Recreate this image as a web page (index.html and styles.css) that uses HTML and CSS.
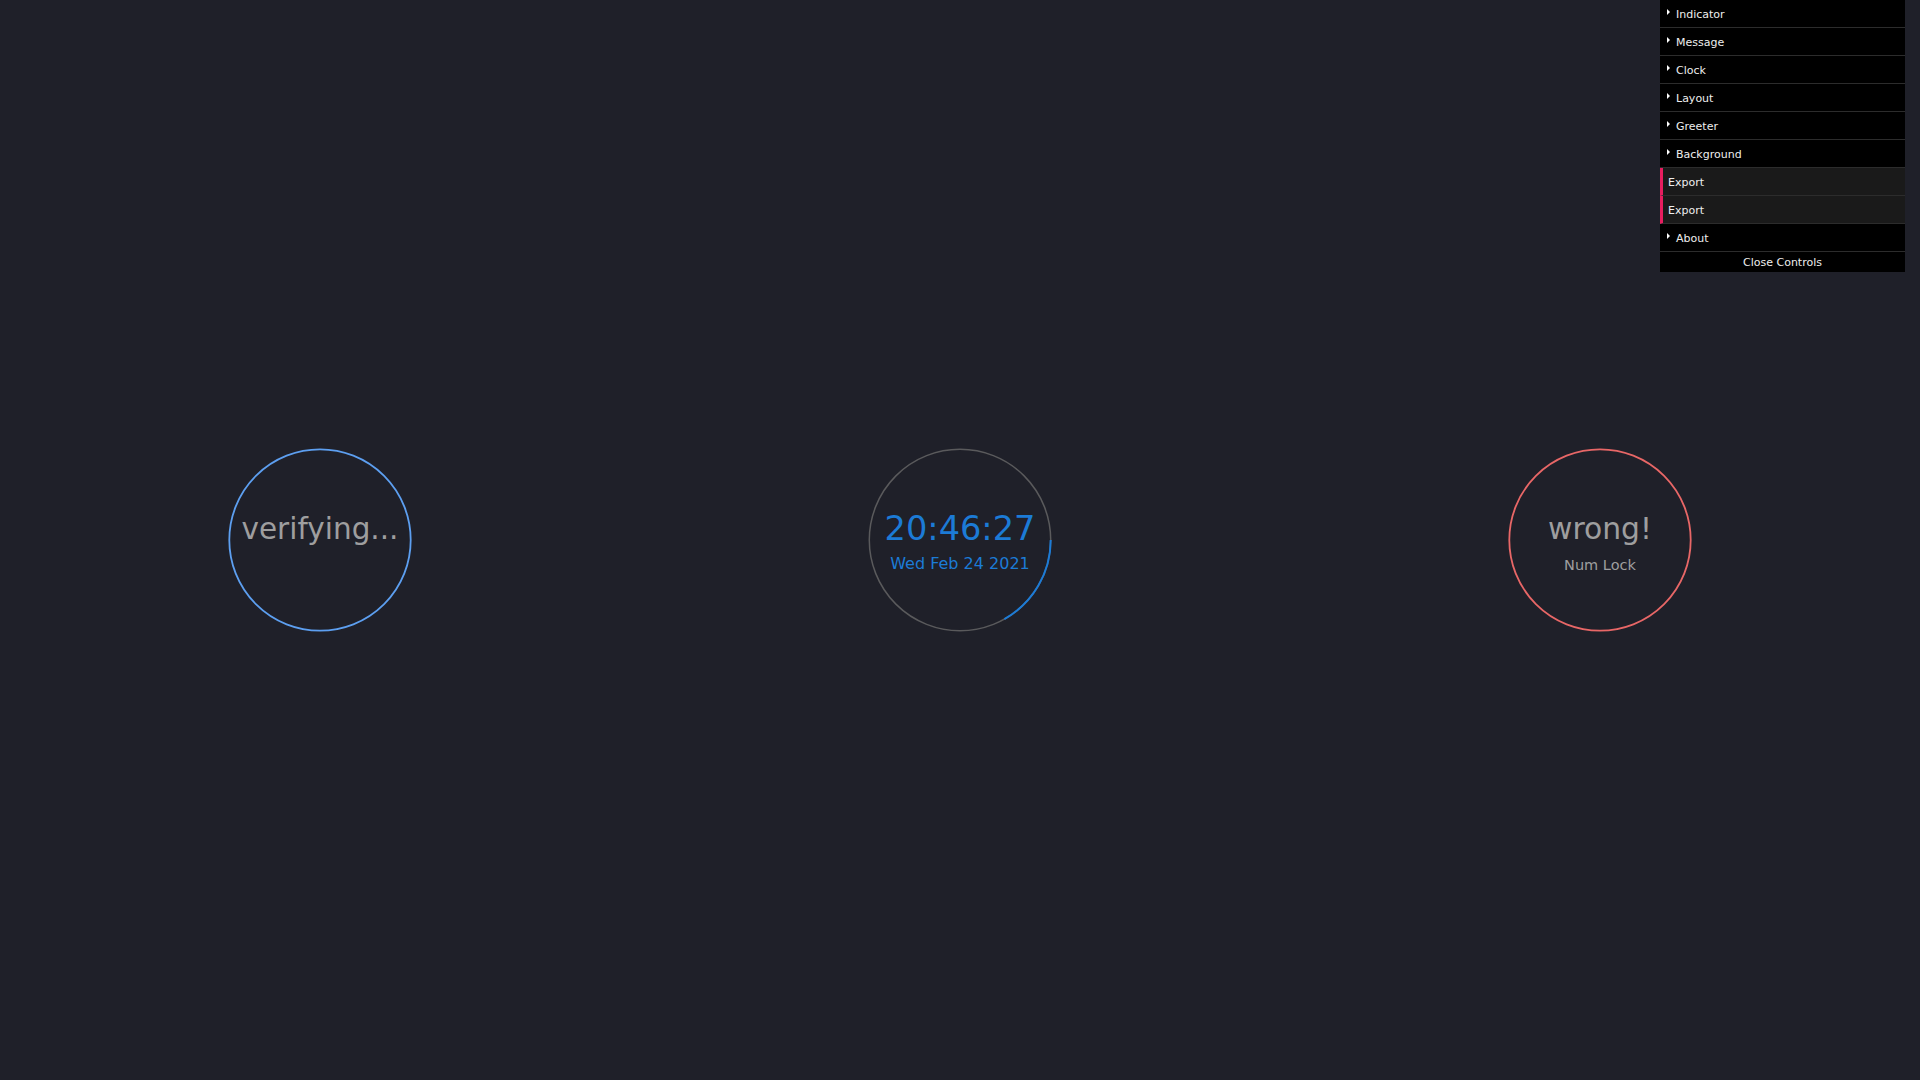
FILE: index.html
```html
<!DOCTYPE html>
<html lang="en">
<head>
<meta charset="utf-8">
<title>i3lock-color configurator</title>
<link rel="stylesheet" href="styles.css">
</head>
<body>
<main class="stage">
  <section class="cell">
    <div class="ring ring-verify">
      <svg class="ring-svg" viewBox="0 0 184 184" width="184" height="184">
        <circle cx="92" cy="92" r="90.7" fill="none" stroke="#5d9ff0" stroke-width="1.8"/>
      </svg>
      <div class="ring-text verify-text">verifying...</div>
    </div>
  </section>
  <section class="cell">
    <div class="ring ring-clock">
      <svg class="ring-svg" viewBox="0 0 184 184" width="184" height="184">
        <circle cx="92" cy="92" r="90.7" fill="none" stroke="#5a5a5c" stroke-width="1.5"/>
        <path d="M182.7 92 A90.7 90.7 0 0 1 136.35 171.1" fill="none" stroke="#1c7bd6" stroke-width="2"/>
      </svg>
      <div class="ring-text clock-time">20:46:27</div>
      <div class="ring-text clock-date">Wed Feb 24 2021</div>
    </div>
  </section>
  <section class="cell">
    <div class="ring ring-wrong">
      <svg class="ring-svg" viewBox="0 0 184 184" width="184" height="184">
        <circle cx="92" cy="92" r="90.7" fill="none" stroke="#e86767" stroke-width="1.8"/>
      </svg>
      <div class="ring-text wrong-text">wrong!</div>
      <div class="ring-text lock-text">Num Lock</div>
    </div>
  </section>
</main>

<aside class="gui">
  <ul class="gui-list">
    <li class="gui-row gui-folder">Indicator</li>
    <li class="gui-row gui-folder">Message</li>
    <li class="gui-row gui-folder">Clock</li>
    <li class="gui-row gui-folder">Layout</li>
    <li class="gui-row gui-folder">Greeter</li>
    <li class="gui-row gui-folder">Background</li>
    <li class="gui-row gui-button">Export</li>
    <li class="gui-row gui-button">Export</li>
    <li class="gui-row gui-folder">About</li>
  </ul>
  <div class="gui-close">Close Controls</div>
</aside>
</body>
</html>
```
FILE: styles.css
```css
html, body {
  margin: 0;
  padding: 0;
}

body {
  background: #1f2029;
  width: 1920px;
  height: 1080px;
  overflow: hidden;
  font-family: "DejaVu Sans", "Liberation Sans", sans-serif;
}

.stage {
  display: grid;
  grid-template-columns: repeat(3, 640px);
  align-items: center;
  justify-items: center;
  height: 1080px;
}

.ring {
  position: relative;
  width: 184px;
  height: 184px;
  display: flex;
  flex-direction: column;
  align-items: center;
  box-sizing: border-box;
  padding-top: 68px;
}

.ring-svg {
  position: absolute;
  left: 0;
  top: 0;
}

.ring-text {
  position: relative;
  white-space: nowrap;
}

.verify-text {
  font-size: 29.5px;
  line-height: 28px;
  color: #9e9e9f;
  margin-top: -0.8px;
}

.ring-clock {
  padding-top: 64px;
}

.clock-time {
  font-size: 33.6px;
  line-height: 33px;
  color: #1c7bd6;
}

.clock-date {
  font-size: 16px;
  line-height: 18px;
  color: #1c7bd6;
  margin-top: 10px;
}

.wrong-text {
  font-size: 29.8px;
  line-height: 28px;
  color: #9e9e9f;
  margin-top: -0.8px;
}

.lock-text {
  font-size: 14.5px;
  line-height: 17px;
  color: #9e9e9f;
  margin-top: 13.5px;
}

/* dat.GUI style panel */
.gui {
  position: absolute;
  top: 0;
  right: 15px;
  width: 245px;
  font-family: "DejaVu Sans", "Liberation Sans", sans-serif;
  font-size: 11px;
  color: #eeeeee;
}

.gui-list {
  list-style: none;
  margin: 0;
  padding: 0;
}

.gui-row {
  height: 27px;
  line-height: 29px;
  border-bottom: 1px solid #2c2c2c;
  white-space: nowrap;
  overflow: hidden;
}

.gui-folder {
  background: #000;
  padding-left: 7px;
}

.gui-folder::before {
  content: "";
  display: inline-block;
  width: 0;
  height: 0;
  border-left: 3px solid #ffffff;
  border-top: 3px solid transparent;
  border-bottom: 3px solid transparent;
  margin-right: 6px;
  vertical-align: 3.5px;
}

.gui-button {
  background: #1a1a1a;
  border-left: 3px solid #e61d5f;
  padding-left: 5px;
}

.gui-close {
  height: 20px;
  line-height: 21px;
  background: #000;
  text-align: center;
}
```
